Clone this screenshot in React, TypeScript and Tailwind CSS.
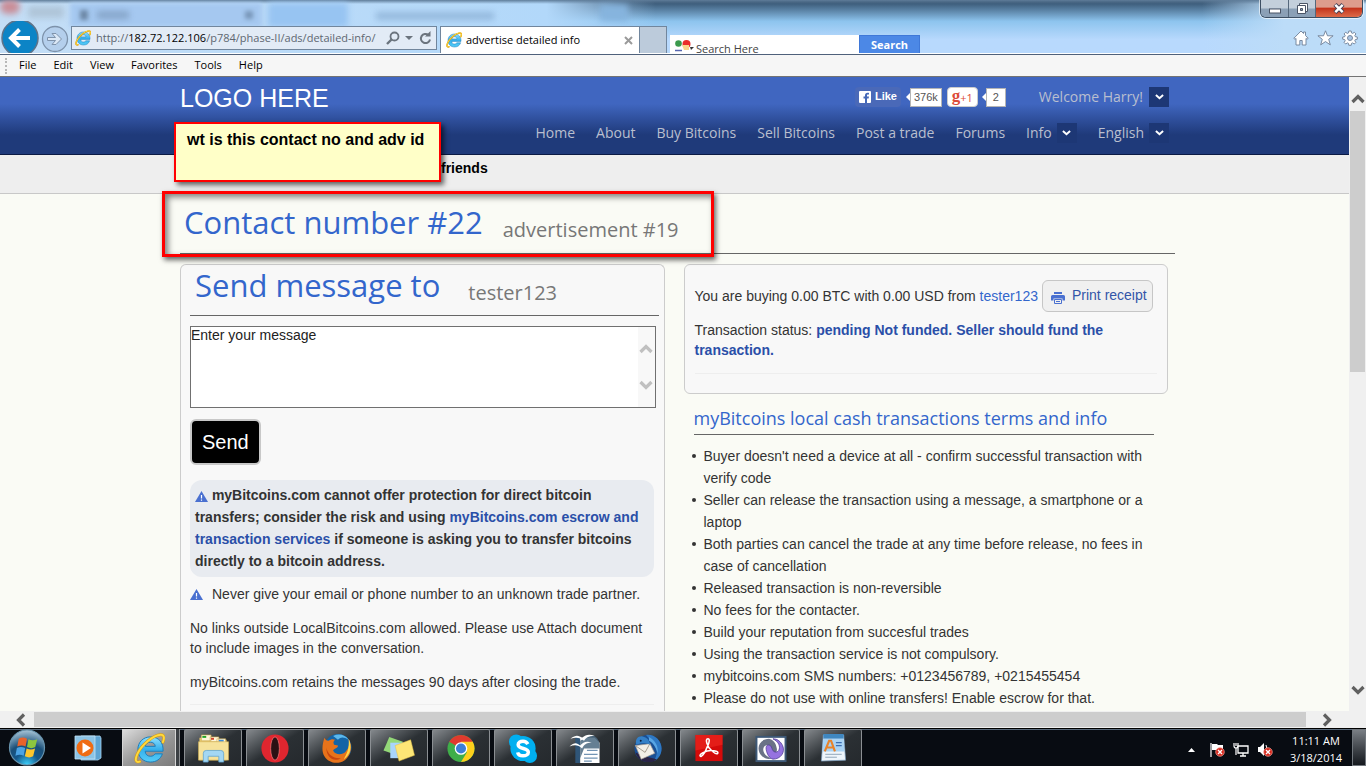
import React from "react";

const ui = "font-['Open_Sans','Noto_Sans',sans-serif]";
const display = "font-['Open_Sans','Noto_Sans',sans-serif]";

/* ---------- shared icons ---------- */

function IeIcon({ className }: { className: string }) {
  return (
    <svg viewBox="0 0 32 32" className={className} aria-hidden="true">
      <defs>
        <linearGradient id="ieBlue" x1="0" y1="0" x2="0" y2="1">
          <stop offset="0" stopColor="#8fe0ff" />
          <stop offset="0.5" stopColor="#35b0ec" />
          <stop offset="1" stopColor="#54cdf8" />
        </linearGradient>
      </defs>
      <path
        d="M17 4C9.500 4 4 9.500 4 17s5.500 13 13 13c6 0 10.500-3 12.300-8.500h-7.600c-1 1.700-2.500 2.500-4.700 2.500-3.200 0-5.300-2-5.500-5.200H30C30.600 10 25.800 4 17 4zm-5.300 9.800c.5-2.700 2.400-4.300 5.200-4.300 2.800 0 4.700 1.600 5.100 4.300z"
        fill="url(#ieBlue)"
        stroke="#1b7dbb"
        strokeWidth="1"
      />
      <path
        d="M6 29.500C1.500 31 .8 27.500 3.500 21.500 8 12 20 2 27.500 1.800c4-.1 4 3.600 2.300 7.700"
        fill="none"
        stroke="#d99a0a"
        strokeWidth="3"
        strokeLinecap="round"
      />
      <path
        d="M6 29.500C1.500 31 .8 27.500 3.500 21.500 8 12 20 2 27.500 1.800c4-.1 4 3.600 2.300 7.700"
        fill="none"
        stroke="#ffd83d"
        strokeWidth="2"
        strokeLinecap="round"
      />
    </svg>
  );
}

function Chevron({ dir, className }: { dir: "up" | "down" | "left" | "right"; className: string }) {
  const d = {
    up: "M1.500 10 7 4.500l5.500 5.500",
    down: "M1.500 4l5.500 5.500L12.500 4",
    left: "M10 1.500 4.500 7l5.500 5.500",
    right: "M4 1.500 9.500 7 4 12.500",
  }[dir];
  return (
    <svg viewBox="0 0 14 14" className={className} aria-hidden="true">
      <path d={d} fill="none" stroke="currentColor" strokeWidth="3.200" />
    </svg>
  );
}

function Warning() {
  return (
    <svg viewBox="0 0 13 11" className="inline-block h-[11px] w-[13px]" aria-hidden="true">
      <path d="M6.500 0 13 11H0z" fill="#4a70d0" />
      <path d="M6.500 4v3.500M6.500 8.500v1.200" stroke="#fff" strokeWidth="1.200" />
    </svg>
  );
}

/* ---------- browser chrome ---------- */

function WindowButtons() {
  return (
    <div className="flex h-[18px] overflow-hidden rounded-b-md border border-t-0 border-[#3d4f63] shadow-[0_0_0_1px_rgba(255,255,255,0.6)]">
      <button aria-label="Minimize" className="flex w-7 items-center justify-center border-r border-[#55687c] bg-linear-to-b from-[#c3cfdb] from-45% to-[#8ba0b6] to-55%">
        <svg viewBox="0 0 12 6" className="mt-1 h-[6px] w-3">
          <rect x=".5" y="1" width="11" height="4" fill="#fff" stroke="#4b5566" />
        </svg>
      </button>
      <button aria-label="Restore" className="flex w-[27px] items-center justify-center border-r border-[#55687c] bg-linear-to-b from-[#c3cfdb] from-45% to-[#8ba0b6] to-55%">
        <svg viewBox="0 0 13 13" className="h-[13px] w-[13px]">
          <path d="M3.500 1.500h8v8h-8z" fill="#fff" stroke="#4b5566" />
          <path d="M1.500 3.500h8v8h-8z" fill="#fff" stroke="#4b5566" />
          <path d="M4.500 6.500h2v2h-2z" fill="#8ba0b6" stroke="#4b5566" />
        </svg>
      </button>
      <button aria-label="Close window" className="flex w-[46px] items-center justify-center bg-linear-to-b from-[#dd9c8c] from-40% via-[#c4341c] via-50% to-[#dd6a48]">
        <svg viewBox="0 0 12 11" className="h-[11px] w-3">
          <path d="M2 1.500l8 8M10 1.500l-8 8" stroke="#4b4457" strokeWidth="4.400" />
          <path d="M2.300 1.800l7.400 7.400M9.700 1.800 2.300 9.200" stroke="#fff" strokeWidth="2.400" />
        </svg>
      </button>
    </div>
  );
}

function BrowserTools() {
  return (
    <div className="flex items-center gap-2">
      <button aria-label="Home page">
        <svg viewBox="0 0 16 16" className="h-4 w-4">
          <path d="M8 1 .8 8.300l1.200 1 1-.9V15h3.800v-4.500h2.400V15H13V8.400l1 .9 1.200-1L12.500 5.500V2h-2v1.500z" fill="#fff" stroke="#6e7f96" strokeWidth=".9" />
        </svg>
      </button>
      <button aria-label="Favorites list">
        <svg viewBox="0 0 17 16" className="h-4 w-[17px]">
          <path d="M8.500.8l2 5h5.600l-4.400 3.500 1.600 5.500-4.800-3.200-4.800 3.200 1.600-5.500L.9 5.800h5.600z" fill="#fff" stroke="#6e7f96" strokeWidth=".9" />
        </svg>
      </button>
      <button aria-label="Settings">
        <svg viewBox="0 0 16 16" className="h-4 w-4">
          <g fill="#fff" stroke="#6e7f96" strokeWidth=".9">
            <path d="M6.800 1h2.400l.3 1.900 1.200.5 1.600-1.100 1.600 1.600-1.100 1.600.5 1.200 2 .3v2.200l-2 .4-.5 1.200 1.100 1.600-1.600 1.600-1.600-1.100-1.200.5-.3 1.900H6.800l-.3-1.900-1.200-.5-1.600 1.100-1.600-1.600 1.100-1.600-.5-1.200-2-.4V7l2-.3.5-1.200-1.100-1.600 1.600-1.600 1.600 1.100 1.200-.5z" />
            <circle cx="8" cy="8" r="2.500" fill="#a9c4e4" />
          </g>
        </svg>
      </button>
    </div>
  );
}

function AddressRow() {
  return (
    <div className="flex h-8 items-start">
      <div className="flex w-[71px] shrink-0 items-center overflow-hidden pl-px">
        <button aria-label="Back" className="-mt-[2px]">
          <svg viewBox="0 0 38 38" className="h-[38px] w-[38px]">
            <circle cx="19" cy="19" r="18" fill="#0c84c6" stroke="#5f7389" strokeWidth="1.500" />
            <path d="M29 19H11M18.500 10.500 10 19l8.500 8.500" fill="none" stroke="#fff" strokeWidth="4" />
          </svg>
        </button>
        <button aria-label="Forward" className="ml-[2px]">
          <svg viewBox="0 0 28 28" className="h-7 w-7">
            <circle cx="14" cy="14" r="12.500" fill="#b4cfec" stroke="#7d92aa" strokeWidth="1.300" />
            <path d="M6.500 12.500h8l-3.500-4h4l5.500 5.500-5.500 5.500h-4l3.500-4h-8z" fill="#dbe8f6" stroke="#7f93ab" strokeWidth="1" />
          </svg>
        </button>
      </div>
      <div className="mt-[5px] flex h-6 w-[366px] items-center border border-[#71869d] bg-[#e2ebf6] pl-[3px] pr-1 text-[#5e6771]">
        <IeIcon className="h-4 w-4 shrink-0" />
        <p className="ml-[5px] min-w-0 flex-1 overflow-hidden whitespace-nowrap text-[11px]">
          http://<span className="text-black">182.72.122.106</span>/p784/phase-II/ads/detailed-info/
        </p>
        <button aria-label="Search the web" className="ml-1">
          <svg viewBox="0 0 14 14" className="h-[14px] w-[14px]">
            <circle cx="8.500" cy="5.500" r="4" fill="none" stroke="#6b747e" strokeWidth="1.800" />
            <path d="M5.500 8.500 1 13" stroke="#6b747e" strokeWidth="2.400" />
          </svg>
        </button>
        <svg viewBox="0 0 8 4" className="ml-[5px] h-1 w-2">
          <path d="M0 0h8L4 4z" fill="#6b747e" />
        </svg>
        <button aria-label="Refresh" className="ml-[6px]">
          <svg viewBox="0 0 13 14" className="h-[14px] w-[13px]">
            <path d="M9.500 4A4.600 4.600 0 1 0 11 8.500" fill="none" stroke="#6b747e" strokeWidth="2" />
            <path d="M11.500 0v5.500H6z" fill="#6b747e" />
          </svg>
        </button>
      </div>
      <div className="ml-[3px] mt-[5px] flex h-[27px] w-[200px] items-center border border-b-0 border-[#71869d] bg-white pl-[5px] pr-[6px]">
        <IeIcon className="h-4 w-4 shrink-0" />
        <span className="ml-1 flex-1 whitespace-nowrap text-[11px] text-black">advertise detailed info</span>
        <button aria-label="Close tab">
          <svg viewBox="0 0 9 9" className="h-[9px] w-[9px]">
            <path d="M1 1l7 7M8 1 1 8" stroke="#9a9a9a" strokeWidth="2" />
          </svg>
        </button>
      </div>
      <button aria-label="New tab" className="mt-[5px] h-[27px] w-[27px] border border-b-0 border-l-0 border-[#71869d] bg-[#bccbdb]" />
      <form className="ml-[3px] mt-[14px] flex h-[18px] w-[250px] overflow-hidden bg-white">
        <svg viewBox="0 0 19 12" className="ml-[5px] mt-[5px] h-3 w-[19px] shrink-0">
          <circle cx="3.500" cy="3.500" r="3.300" fill="#3c9a4d" />
          <circle cx="11.500" cy="4" r="4" fill="#ea2e2a" />
          <path d="M7 5h7v5H9z" fill="#fbd58a" />
          <path d="M0 10.500h7" stroke="#5767b0" strokeWidth="1.500" />
          <path d="M15 7h4l-3 3z" fill="#333" />
        </svg>
        <input aria-label="Search" defaultValue="Search Here" className="ml-[2px] h-[26px] min-w-0 flex-1 bg-transparent text-[11px] text-[#444] outline-none" />
        <button type="button" className="h-5 w-[61px] shrink-0 border border-[#3f78d8] bg-[#4c88e6] text-[11px] font-bold text-white">
          Search
        </button>
      </form>
    </div>
  );
}

function BrowserChrome() {
  const menus = ["File", "Edit", "View", "Favorites", "Tools", "Help"];
  return (
    <header className={`shrink-0 ${ui}`}>
      <div className="relative flex h-[54px] flex-col overflow-hidden border-b border-white bg-linear-to-b from-[#2f4a66] via-[#8dc4ee] via-40% to-[#b8d9fd] to-75%">
        <div className="absolute inset-x-0 top-0 h-full bg-linear-to-r from-[#c4def6] via-[#b2d8fa] via-40% to-transparent to-48%" />
        <div className="absolute inset-x-0 top-0 h-full bg-linear-to-r from-transparent from-88% to-[#bcdcf8] to-94%" />
        <div className="absolute inset-x-0 top-0 h-1 bg-linear-to-b from-[#5f7d9a] to-transparent" />
        <div className="absolute left-[70px] top-[3px] h-6 w-[192px] bg-[#a5c8f0] blur-[2px]" />
        <div className="absolute left-[268px] top-[3px] h-6 w-[80px] bg-[#97c4f2] blur-[3px]" />
        <div className="absolute left-[600px] top-[5px] h-4 w-7 bg-[#86b4de] blur-[3px]" />
        <div className="absolute left-0 top-0 h-[14px] w-5 rounded-full bg-[#c98d97] blur-[3px]" />
        <div className="absolute left-[28px] top-[6px] h-3 w-9 bg-[#a3b5c5] opacity-60 blur-[3px]" />
        <div className="absolute left-[80px] top-[10px] h-[10px] w-2 bg-[#6d88a6] blur-[2px]" />
        <div className="absolute left-[97px] top-[11px] h-2 w-8 bg-[#7f9dc0] opacity-80 blur-[3px]" />
        <div className="absolute left-[245px] top-[11px] h-2 w-2 bg-[#7896b8] blur-[2px]" />
        <div className="absolute left-[376px] top-[12px] h-2 w-[118px] bg-[#7fa4ca] opacity-60 blur-[3px]" />
        <div className="relative flex h-[21px] justify-end pr-[3px]">
          <WindowButtons />
        </div>
        <div className="relative flex items-start justify-between">
          <AddressRow />
          <div className="mr-2 mt-[9px]">
            <BrowserTools />
          </div>
        </div>
      </div>
      <nav className="flex h-[23px] items-center border-y border-t-[#4f617b] border-b-[#737373] bg-[#f6f6f6] pl-[5px] text-[11px] text-black">
        <span className="mr-3 h-4 border-l-2 border-dotted border-[#b8b8b8]" />
        <div className="flex gap-[17px]">
          {menus.map((m) => (
            <button key={m}>{m}</button>
          ))}
        </div>
      </nav>
    </header>
  );
}

/* ---------- web page ---------- */

function DropToggle({ label }: { label: string }) {
  return (
    <button aria-label={label} className="flex h-5 w-5 items-center justify-center bg-[#1d3775] text-white">
      <svg viewBox="0 0 10 6" className="h-[6px] w-[9px]">
        <path d="M1 .8 5 4.300 9 .8" fill="none" stroke="currentColor" strokeWidth="2.200" />
      </svg>
    </button>
  );
}

function SocialCount({ value }: { value: string }) {
  return (
    <span className="flex items-center">
      <svg viewBox="0 0 4 8" className="h-2 w-1">
        <path d="M4 0v8L0 4z" fill="#fff" />
      </svg>
      <span className="min-w-5 border border-[#b5b5b5] bg-white px-[3px] text-center font-['Liberation_Sans',sans-serif] text-[11px] leading-[17px] text-[#555]">{value}</span>
    </span>
  );
}

function SiteHeader() {
  const links = ["Home", "About", "Buy Bitcoins", "Sell Bitcoins", "Post a trade", "Forums"];
  return (
    <div className="h-[78px] border-b border-[#0b1a44] bg-linear-to-b from-[#4066c0] from-35% to-[#1f3a7a] to-75%">
      <div className={`mx-auto max-w-[989px] text-sm text-[#b9bfcf] ${display}`}>
        <div className="flex h-10 items-center justify-between">
          <a href="#" className="pt-[3px] font-['Liberation_Sans',Arial,sans-serif] text-[25px] text-white">
            LOGO HERE
          </a>
          <div className="flex items-center">
            <button className="flex h-5 items-center gap-1 rounded-sm bg-[#4a69b8] px-1 font-['Liberation_Sans',sans-serif] text-[11px] font-bold text-white">
              <svg viewBox="0 0 12 12" className="h-3 w-3">
                <rect width="12" height="12" rx="1" fill="#fff" />
                <path d="M8 12V7.500h1.600L10 5.600H8V4.500c0-.6.200-.9 1-.9h1V1.900C9.700 1.800 9.200 1.800 8.700 1.800 7 1.800 6 2.700 6 4.300v1.300H4.500v1.900H6V12z" fill="#4468b8" />
              </svg>
              Like
            </button>
            <span className="ml-[5px]">
              <SocialCount value="376k" />
            </span>
            <button className="ml-[5px] flex h-5 w-[31px] items-center justify-center rounded-sm border border-[#ccc] bg-white leading-none text-[#dd4b39]">
              <span className="pb-1 font-['Liberation_Serif',serif] text-[17px] font-bold">g</span>
              <span className="text-[11px]">+1</span>
            </button>
            <span className="ml-1">
              <SocialCount value="2" />
            </span>
            <span className="ml-[33px] mr-[6px]">Welcome Harry!</span>
            <DropToggle label="Account menu" />
          </div>
        </div>
        <nav className="flex h-8 items-center justify-end gap-[21px]">
          {links.map((l) => (
            <a key={l} href="#">
              {l}
            </a>
          ))}
          <span className="flex items-center gap-[5px]">
            <a href="#">Info</a>
            <DropToggle label="Info menu" />
          </span>
          <span className="flex items-center gap-[5px]">
            <a href="#">English</a>
            <DropToggle label="Language menu" />
          </span>
        </nav>
      </div>
    </div>
  );
}

function MessagePanel() {
  return (
    <section className="min-w-0 rounded-t-md border border-b-0 border-[#ccc] bg-[#f8f8f8] pl-[9px] pr-[5px]">
      <h2 className={`flex h-[51px] items-start gap-7 border-b border-[#666] pl-[5px] text-[31px] leading-10 text-[#36c] ${display}`}>
        Send message to <small className="pt-2 text-xl leading-10 text-[#777]">tester123</small>
      </h2>
      <div className="mr-[3px] mt-[10px] flex h-[82px] border border-[#707070] bg-white">
        <textarea aria-label="Message" defaultValue="Enter your message" className="min-w-0 flex-1 resize-none overflow-hidden text-sm leading-4 text-[#222] outline-none" />
        <div className="flex w-[17px] flex-col items-center justify-between bg-[#f8f8f8] py-[15px] text-[#c0c0c0]">
          <Chevron dir="up" className="h-[14px] w-[14px]" />
          <Chevron dir="down" className="h-[14px] w-[14px]" />
        </div>
      </div>
      <button className="mt-[11px] block h-[46px] rounded-md border-2 border-[#c8c8c8] bg-black px-[10px] text-xl text-white">Send</button>
      <div className="mr-[5px]">
        <p className="mt-[15px] rounded-xl bg-[#e8ebf0] px-[5px] pb-[5px] pt-1 font-bold leading-[22px]">
          <Warning /> myBitcoins.com cannot offer protection for direct bitcoin transfers; consider the risk and using{" "}
          <a href="#" className="text-[#2a4fa8]">
            myBitcoins.com escrow and transaction services
          </a>{" "}
          if someone is asking you to transfer bitcoins directly to a bitcoin address.
        </p>
        <p className="mt-[7px] flex items-center gap-[9px]">
          <Warning /> Never give your email or phone number to an unknown trade partner.
        </p>
        <p className="mt-[14px]">No links outside LocalBitcoins.com allowed. Please use Attach document to include images in the conversation.</p>
        <p className="mt-[14px]">myBitcoins.com retains the messages 90 days after closing the trade.</p>
        <hr className="mt-3 border-[#eee]" />
        <div className="h-6" />
      </div>
    </section>
  );
}

const terms = [
  "Buyer doesn't need a device at all - confirm successful transaction with verify code",
  "Seller can release the transaction using a message, a smartphone or a laptop",
  "Both parties can cancel the trade at any time before release, no fees in case of cancellation",
  "Released transaction is non-reversible",
  "No fees for the contacter.",
  "Build your reputation from succesful trades",
  "Using the transaction service is not compulsory.",
  "mybitcoins.com SMS numbers: +0123456789, +0215455454",
  "Please do not use with online transfers! Enable escrow for that.",
];

function InfoColumn() {
  return (
    <div className="min-w-0">
      <section className="h-[130px] rounded-md border border-[#ccc] bg-[#f8f8f8] px-[10px] pt-[15px]">
        <div className="flex h-8 items-center gap-1 whitespace-nowrap">
          <p>
            You are buying 0.00 BTC with 0.00 USD from{" "}
            <a href="#" className="text-[#36c]">
              tester123
            </a>
          </p>
          <button className="flex h-8 items-center gap-[7px] rounded-md border border-[#c6c6c6] bg-[#f0f0f0] pl-2 pr-[5px] text-[#3355a8]">
            <svg viewBox="0 0 14 12" className="mt-1 h-3 w-[14px]">
              <path d="M3 0h8v2H3zM1.500 3h11q1.500 0 1.500 1.500V8.500h-2.500V6.500h-9v2H0v-4Q0 3 1.500 3z" fill="#4a70d0" />
              <path d="M3.500 7.500h7v4h-7z" fill="none" stroke="#4a70d0" />
              <path d="M5 9.500h4" stroke="#4a70d0" />
            </svg>
            <span className="pb-[2px]">Print receipt</span>
          </button>
        </div>
        <p className="mt-2">
          Transaction status: <strong className="text-[#2a4fa8]">pending Not funded. Seller should fund the transaction.</strong>
        </p>
        <hr className="mt-[13px] border-[#eee]" />
      </section>
      <h3 className={`ml-[10px] mr-[14px] mt-[10px] border-b border-[#666] pb-1 pt-[2px] text-lg leading-6 text-[#36c] ${display}`}>
        myBitcoins local cash transactions terms and info
      </h3>
      <ul className="ml-2 mr-[14px] mt-[10px] leading-[22px]">
        {terms.map((t) => (
          <li key={t} className="flex gap-2">
            <span className="mt-[9px] h-1 w-1 shrink-0 rounded-full bg-[#333]" />
            <span>{t}</span>
          </li>
        ))}
      </ul>
    </div>
  );
}

function WebPage() {
  return (
    <div className="min-w-0 flex-1 overflow-hidden bg-[#fafbf5]">
      <SiteHeader />
      <div className="h-[39px] border-b border-[#c8c8c8] bg-[#eee]">
        <p className="mx-auto max-w-[989px] pl-[261px] pt-[3px] text-sm font-bold leading-5 text-black">friends</p>
      </div>
      <main className="relative mx-auto max-w-[989px] text-sm leading-5 text-[#333]">
        <h1 className={`-mr-[6px] flex h-[60px] items-start gap-5 border-b border-[#666] pl-1 pt-2 text-[31px] leading-10 text-[#36c] ${display}`}>
          Contact number #22 <small className="pt-2 text-xl leading-10 text-[#777]">advertisement #19</small>
        </h1>
        <div className="mt-[10px] grid grid-cols-2 items-start gap-[19px] pr-px">
          <MessagePanel />
          <InfoColumn />
        </div>
        <aside className="absolute -left-[6px] -top-[72px] h-[60px] w-[267px] border-2 border-[#f00] bg-[#ffffc8] px-[11px] py-[6px] text-base font-bold leading-5 text-black shadow-[3px_3px_5px_rgba(0,0,0,0.6)]">
          wt is this contact no and adv id
        </aside>
        <div className="absolute -left-[18px] -top-[3px] h-[66px] w-[552px] border-3 border-[#f00] shadow-[2px_3px_5px_rgba(0,0,0,0.6),inset_3px_3px_6px_rgba(0,0,0,0.5)]" />
      </main>
    </div>
  );
}

/* ---------- taskbar ---------- */

const taskIcons: { name: string; art: React.ReactNode }[] = [
  {
    name: "Explorer",
    art: (
      <>
        <path d="M2 5h11l2 2h15v21H2z" fill="#e9c869" />
        <path d="M4 2h10v6H4zM13 4h9v5h-9zM20 6h9v4h-9z" fill="#fff6d8" stroke="#c9a64d" strokeWidth=".6" />
        <path d="M5 3h4v2H5z" fill="#23a323" />
        <path d="M14 5h3v2h-3z" fill="#d2442c" />
        <path d="M22 7h5v2h-5z" fill="#3b8bd8" />
        <path d="M1 9h31v19H1z" fill="#f6e29a" stroke="#d0af55" strokeWidth=".6" />
        <path d="M6 30V21q0-3 3-3h15q3 0 3 3v9h-5v-6H11v6z" fill="#a3d7f3" stroke="#5fa3cf" strokeWidth=".8" />
      </>
    ),
  },
  {
    name: "Opera",
    art: (
      <>
        <ellipse cx="16" cy="16" rx="14" ry="14.500" fill="#e0262f" />
        <ellipse cx="16" cy="16" rx="4.500" ry="12" fill="#2b1114" stroke="#f78080" strokeWidth=".7" />
      </>
    ),
  },
  {
    name: "Firefox",
    art: (
      <>
        <circle cx="17" cy="15" r="14" fill="#1464a6" />
        <path d="M12 3c6-3 13-1 16 4-5-3-8-3-11 0z" fill="#5cb8ec" />
        <path d="M28 6c4 7 3 17-4 22s-17 3-21-4S2 9 3 5c1 2 2 3 4 3 3-2 5-2 7-1-2 2-2 3-1 5l4 1c0 3-4 3-5 5 2 5 10 5 13 1 4-4 4-8 3-13z" fill="#e8731a" />
        <path d="M28 6c4 8 2 17-5 21 3-5 6-11 5-21z" fill="#ffd94a" />
        <path d="M5 15c1 7 8 12 15 11-6 4-15 1-15-11z" fill="#c8450f" />
      </>
    ),
  },
  {
    name: "Sticky Notes",
    art: (
      <>
        <path d="M0 18 6 4l14 5-6 14z" fill="#93d878" />
        <path d="M7 10h14v16H7z" fill="#a9d5fb" />
        <path d="M12 13 28 7l4 16-16 6z" fill="#fde676" stroke="#e0bd45" strokeWidth=".5" />
      </>
    ),
  },
  {
    name: "Chrome",
    art: (
      <>
        <circle cx="16" cy="16" r="14" fill="#3fae49" />
        <path d="M16 16 3.900 9A14 14 0 0 1 28.100 9z" fill="#e03a2e" />
        <path d="M16 9h12.100A14 14 0 0 1 16 30l6-10z" fill="#fdcf1c" />
        <circle cx="16" cy="16" r="6.500" fill="#fff" />
        <circle cx="16" cy="16" r="5.200" fill="#3c7fd6" />
      </>
    ),
  },
  {
    name: "Skype",
    art: (
      <>
        <circle cx="16" cy="16" r="13" fill="#00aff0" />
        <circle cx="9" cy="9" r="7.500" fill="#00aff0" />
        <circle cx="23" cy="23.500" r="7.500" fill="#00aff0" />
        <path d="M21 11.500c-1-2-3-3-5-3-3 0-5 1.500-5 3.600 0 4.900 10.500 3 10.500 7.700 0 2.400-2.500 3.800-5.500 3.800s-5-1.300-5.500-3.600" fill="none" stroke="#fff" strokeWidth="3.600" />
      </>
    ),
  },
  {
    name: "Writer",
    art: (
      <>
        <path d="M6 4h5v27H6z" fill="#2f5578" />
        <path d="M11 5h15l5 5v21H11z" fill="#fff" />
        <path d="M22 2q8 1 9 10v4H15l-4 10V8z" fill="#4a6880" opacity=".85" />
        <path d="M18 18h11M15 22h14M15 26h14M15 29h8" stroke="#7294b4" strokeWidth="1.200" />
        <path d="M1 6c6-5 9-3 12-1 4-4 8-4 13-2-7 0-9 2-11 5-4-3-8-4-14-2zM0 14c5-5 8-4 11-1 3-4 7-5 12-3-6 0-8 2-10 6-4-4-8-4-13-2z" fill="#fff" />
      </>
    ),
  },
  {
    name: "Thunderbird",
    art: (
      <>
        <circle cx="17" cy="16" r="14" fill="#1a4f94" />
        <path d="M15 2c9-1 16 6 16 14 0 6-3 11-8 13 4-6 4-11 1-16z" fill="#2e78c4" />
        <path d="M18 4c6 3 10 9 9 17-2-7-5-11-9-13z" fill="#58a5e4" />
        <path d="M4 20c2 7 8 10 14 10 3 0 6-1 8-3L14 24z" fill="#2a2347" />
        <path d="M4 13 19 11l5 10-14 6z" fill="#f3efe8" stroke="#a59c90" strokeWidth=".7" />
        <path d="m4 13 10 7 5-9" fill="none" stroke="#a59c90" />
        <path d="M5 12C3 6 8 2 13 4c4 1 6 5 6 8-4-2-9-2-14 0z" fill="#3480c8" />
        <circle cx="9.500" cy="8" r="1" fill="#0c1f3c" />
      </>
    ),
  },
  {
    name: "Adobe Reader",
    art: (
      <>
        <path d="M2 2h28v27H2z" fill="#d40a0a" />
        <path d="M2 2h28v10L2 18z" fill="#ee2a22" opacity=".6" />
        <path d="M15 6c3 0 0 7-2 11-2 5-5 8-6 7-2-2 6-6 11-6 4 0 8 1 7 3-2 2-10-5-11-10-1-3-1-5 1-5z" fill="none" stroke="#fff" strokeWidth="1.600" />
      </>
    ),
  },
  {
    name: "Swirl",
    art: (
      <>
        <path d="M0 3h32v27H0z" fill="#3d5876" />
        <path d="M2 5h28v23H2z" fill="#fff" />
        <path d="M14 6C6 6 1 13 4 20c3 6 9 8 13 6-7-1-11-8-8-12 3-3 6-1 7 3 1 5 7 5 6-1-1-6-4-9-8-10z" fill="#6a7286" />
        <path d="M18 27c8 0 13-7 10-14-2-4-5-7-10-7 6 3 8 8 6 12-2 3-6 2-7-2-1-5-7-5-6 1 1 5 3 9 7 10z" fill="#9673e0" stroke="#4f3b95" strokeWidth=".8" />
      </>
    ),
  },
  {
    name: "WordPad",
    art: (
      <>
        <path d="M6 2h21l2 26-25 1z" fill="#eef5fb" stroke="#7a9fc0" strokeWidth=".7" />
        <path d="M6 1h21v5H6z" fill="#3f87c0" />
        <path d="M6 6h21l.800 13H5z" fill="#a9d3f4" />
        <path d="m7.500 19 4.500-11h2l4 11M10 15h6" fill="none" stroke="#e8832a" strokeWidth="2.200" />
        <path d="M19 10h6M19 13h6" stroke="#3b6eb2" strokeWidth="1.200" />
        <path d="M8 22h17M8 25h12" stroke="#90a5b8" />
      </>
    ),
  },
];

function StartOrb() {
  return (
    <svg viewBox="0 0 38 38" className="h-[37px] w-[38px]">
      <defs>
        <radialGradient id="orb" cx=".5" cy="1" r="1">
          <stop offset="0" stopColor="#3fd5ff" />
          <stop offset="0.35" stopColor="#14588c" />
          <stop offset="0.6" stopColor="#1a4f78" />
          <stop offset="1" stopColor="#a9c6d8" />
        </radialGradient>
      </defs>
      <circle cx="19" cy="19" r="18" fill="url(#orb)" stroke="#6793ad" strokeWidth="1.200" />
      <path d="M10.500 10q4-2.500 8.500 0l-1.500 8q-4-2-8.500 0z" fill="#e8632b" />
      <path d="M20.500 10.500q4.500 2.300 9 0l-2 8q-4 2.300-8.500 0z" fill="#8cc63f" />
      <path d="M8.600 19.500q4-2 8.500 0l-1.500 8q-4-2.300-8.500 0z" fill="#4ba3e3" />
      <path d="M18.600 20q4.500 2.300 8.700 0l-2 8q-4 2.300-8.500 0z" fill="#fcc62d" />
    </svg>
  );
}

function ErrorBadge({ x }: { x: number }) {
  return (
    <g>
      <circle cx={x} cy="10" r="4.300" fill="#d8281c" stroke="#f0a098" strokeWidth=".7" />
      <path d={`M${x - 2} 8l4 4M${x + 2} 8l-4 4`} stroke="#fff" strokeWidth="1.400" />
    </g>
  );
}

function Taskbar() {
  return (
    <footer className={`flex h-[38px] shrink-0 items-stretch overflow-hidden border-t border-black bg-[#080c12] text-[11px] text-white shadow-[inset_0_1px_0_#5b6b7c] ${ui}`}>
      <button aria-label="Start" className="flex w-[54px] items-center justify-center">
        <StartOrb />
      </button>
      <button aria-label="Media Player" className="flex w-[68px] items-center justify-center">
        <svg viewBox="0 0 28 28" className="h-7 w-7">
          <path d="M7 2h19l1 2v20l-3 2H7z" fill="#5da4d3" stroke="#a9d6f2" strokeWidth=".8" />
          <path d="M1 2h20v23H1z" fill="#8cc4e6" stroke="#c5e5f7" strokeWidth=".8" />
          <circle cx="11" cy="14" r="8.500" fill="#ef6c14" />
          <path d="M8.500 8.500v11L17 14z" fill="#fff" />
        </svg>
      </button>
      <button aria-label="Internet Explorer" className="flex w-[54px] items-center justify-center border border-b-0 border-[#d5d5d5] bg-linear-to-br from-[#dcdcdc] via-[#999] to-[#7c7c7c]">
        <IeIcon className="h-[31px] w-[31px]" />
      </button>
      <span className="mr-1 w-1 border-r border-[#8a8d90] bg-[#3c4044]" />
      <div className="flex gap-1">
        {taskIcons.map((t) => (
          <button
            key={t.name}
            aria-label={t.name}
            className="flex w-[58px] items-center justify-center rounded-t-xs border border-b-0 border-[#8b8f93] bg-linear-to-br from-[#85898d] via-[#2b3034] via-50% to-[#25292d]"
          >
            <svg viewBox="0 0 32 32" className="h-[31px] w-8">
              {t.art}
            </svg>
          </button>
        ))}
      </div>
      <div className="ml-auto flex items-center">
        <svg viewBox="0 0 7 4" className="mr-[14px] mt-1 h-1 w-[7px]">
          <path d="M0 4h7L3.500 0z" fill="#fff" />
        </svg>
        <svg viewBox="0 0 16 16" className="mr-2 mt-1 h-4 w-4">
          <path d="M2 1v14" stroke="#fff" strokeWidth="1.200" />
          <path d="M3 2h5l1 1h5v6H9L8 8H3z" fill="#fff" />
          <ErrorBadge x={11} />
        </svg>
        <svg viewBox="0 0 16 16" className="mr-2 mt-1 h-4 w-4">
          <path d="M5 4h10v7H5zM7 14h6M10 11v3" fill="none" stroke="#fff" strokeWidth="1.300" />
          <path d="M1 1v3q0 2 2 2t2-2V1M3 1v3M3 6v7" fill="none" stroke="#fff" strokeWidth="1.200" />
        </svg>
        <svg viewBox="0 0 16 16" className="mr-4 mt-1 h-4 w-4">
          <path d="M1 5h2l4-4v13l-4-4H1z" fill="#fff" />
          <path d="M9 3q2 4 0 8" fill="none" stroke="#fff" />
          <ErrorBadge x={11} />
        </svg>
        <p className="w-[54px] whitespace-nowrap pt-[2px] text-center leading-[17px]">
          11:11 AM
          <br />
          3/18/2014
        </p>
        <button aria-label="Show desktop" className="ml-[9px] h-full w-[14px] border border-[#70767c] bg-linear-to-b from-[#7a7f85] to-[#15191e]" />
      </div>
    </footer>
  );
}

export default function App() {
  return (
    <div className="flex h-screen flex-col overflow-hidden bg-[#f0f0f0] font-['Liberation_Sans',Arial,sans-serif]">
      <BrowserChrome />
      <div className="flex min-h-0 flex-1">
        <WebPage />
        <div className="flex w-[17px] shrink-0 flex-col items-center bg-[#f0f0f0] text-[#606060]">
          <button aria-label="Scroll up" className="flex h-[34px] items-center pt-[9px]">
            <Chevron dir="up" className="h-[14px] w-[14px]" />
          </button>
          <div className="h-[261px] w-[15px] bg-[#cdcdcd]" />
          <button aria-label="Scroll down" className="mb-[14px] mt-auto">
            <Chevron dir="down" className="h-[14px] w-[14px]" />
          </button>
        </div>
      </div>
      <div className="flex h-[17px] shrink-0 items-center bg-[#f0f0f0] text-[#606060]">
        <button aria-label="Scroll left" className="flex w-[34px] justify-center pl-2">
          <Chevron dir="left" className="h-[14px] w-[14px]" />
        </button>
        <div className="h-[15px] flex-1 bg-[#cdcdcd]" />
        <button aria-label="Scroll right" className="flex w-[60px] pl-[14px]">
          <Chevron dir="right" className="h-[14px] w-[14px]" />
        </button>
      </div>
      <Taskbar />
    </div>
  );
}
